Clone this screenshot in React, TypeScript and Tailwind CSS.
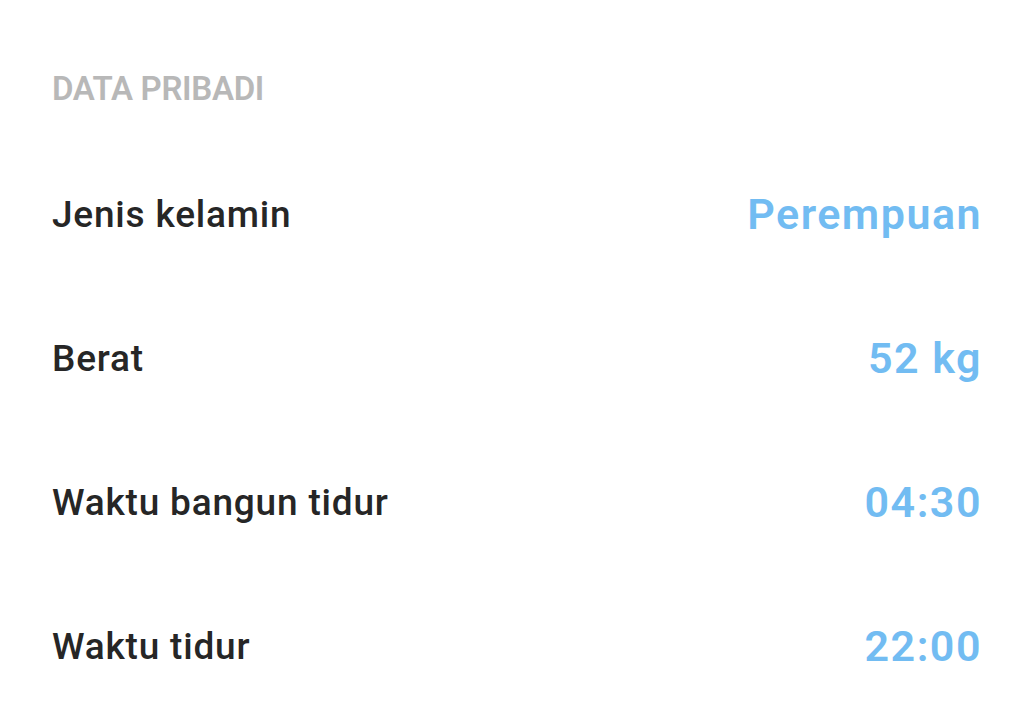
import React from 'react';

const rows = [
  { label: 'Jenis kelamin', value: 'Perempuan' },
  { label: 'Berat', value: '52 kg' },
  { label: 'Waktu bangun tidur', value: '04:30' },
  { label: 'Waktu tidur', value: '22:00' },
];

export default function App() {
  return (
    <div className="w-[1028px] h-[720px] bg-white overflow-hidden font-['Roboto',sans-serif]">
      <div className="pl-[52px] pr-[48px]">
        <div className="h-[142px] pt-[73px]">
          <h2 className="text-[33px] leading-[32px] font-semibold tracking-[-0.3px] text-[#b8b8b8] uppercase">Data Pribadi</h2>
        </div>
        {rows.map((row) => (
          <div key={row.label} className="h-[144px] flex items-center justify-between">
            <span className="text-[37px] leading-none font-medium tracking-[0.8px] text-[#262626]">{row.label}</span>
            <span className="-mr-[2px] text-[43px] leading-none font-semibold tracking-[1.5px] text-[#72bcf2]">{row.value}</span>
          </div>
        ))}
      </div>
    </div>
  );
}
